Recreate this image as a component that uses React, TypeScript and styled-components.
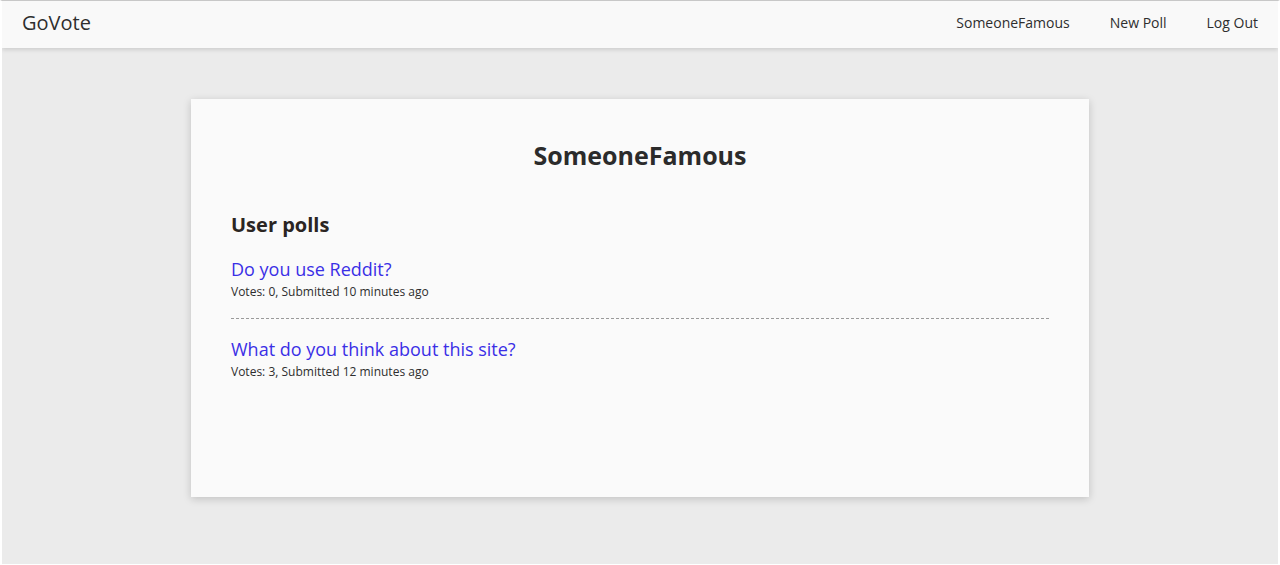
import React from "react";
import styled, { createGlobalStyle } from "styled-components";

const Global = createGlobalStyle`
  html, body { margin: 0; padding: 0; }
  body {
    font-family: "Open Sans", "Noto Sans", sans-serif;
    color: #2e2e2e;
    background: #ffffff;
  }
  * { box-sizing: border-box; }
`;

const Frame = styled.div`
  height: 565px;
  border-top: 1px solid #c8c8c8;
  border-left: 2px solid #ffffff;
  border-right: 2px solid #ffffff;
  border-bottom: 1px solid #ffffff;
  background: #ebebeb;
  display: flex;
  flex-direction: column;
  overflow: hidden;
`;

const NavBar = styled.header`
  height: 47px;
  flex: none;
  background: #f9f9f9;
  box-shadow: 0 2px 4px rgba(0, 0, 0, 0.12);
  display: flex;
  align-items: center;
  justify-content: space-between;
  padding: 0 0 4px 20px;
  position: relative;
  z-index: 1;
`;

const Brand = styled.a`
  font-size: 20px;
  color: #2e2e2e;
  text-decoration: none;
`;

const NavLinks = styled.nav`
  display: flex;
  align-items: center;
`;

const NavLink = styled.a`
  font-size: 14px;
  color: #2e2e2e;
  text-decoration: none;
  padding: 0 20px;
`;

const Main = styled.main`
  flex: 1;
  display: flex;
  justify-content: center;
  padding-top: 51px;
`;

const Card = styled.section`
  width: 898px;
  height: 398px;
  background: #fafafa;
  box-shadow: 0 2px 8px rgba(0, 0, 0, 0.18);
  padding: 39px 40px;
  display: flex;
  flex-direction: column;
`;

const Title = styled.h1`
  margin: 0;
  text-align: center;
  font-size: 25px;
  font-weight: 700;
  color: #2b2b2b;
`;

const SectionTitle = styled.h2`
  margin: 39px 0 0;
  font-size: 20px;
  font-weight: 700;
  color: #2b2522;
`;

const PollList = styled.ul`
  list-style: none;
  margin: 19px 0 0;
  padding: 0;
`;

const PollItem = styled.li<{ $last?: boolean }>`
  padding: ${(p) => (p.$last ? "18px 0 0" : "0 0 18px")};
  border-bottom: ${(p) => (p.$last ? "none" : "1px dashed #9a9a9a")};
`;

const PollLink = styled.a`
  display: block;
  font-size: 18px;
  color: #3a2fe6;
  text-decoration: none;
  line-height: 24px;
`;

const Meta = styled.div`
  margin-top: 3px;
  font-size: 12px;
  color: #2e2e2e;
  line-height: 16px;
`;

const polls = [
  { q: "Do you use Reddit?", votes: 0, ago: "10 minutes ago" },
  { q: "What do you think about this site?", votes: 3, ago: "12 minutes ago" },
];

export default function App() {
  return (
    <>
      <Global />
      <Frame>
        <NavBar>
          <Brand href="#">GoVote</Brand>
          <NavLinks>
            <NavLink href="#">SomeoneFamous</NavLink>
            <NavLink href="#">New Poll</NavLink>
            <NavLink href="#">Log Out</NavLink>
          </NavLinks>
        </NavBar>
        <Main>
          <Card>
            <Title>SomeoneFamous</Title>
            <SectionTitle>User polls</SectionTitle>
            <PollList>
              {polls.map((p, i) => (
                <PollItem key={p.q} $last={i === polls.length - 1}>
                  <PollLink href="#">{p.q}</PollLink>
                  <Meta>
                    Votes: {p.votes}, Submitted {p.ago}
                  </Meta>
                </PollItem>
              ))}
            </PollList>
          </Card>
        </Main>
      </Frame>
    </>
  );
}
